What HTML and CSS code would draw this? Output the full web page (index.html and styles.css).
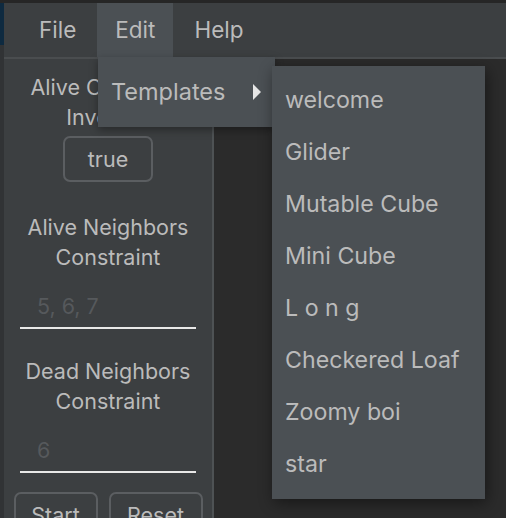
FILE: index.html
```html
<!DOCTYPE html>
<html>
<head>
<meta charset="utf-8">
<link rel="stylesheet" href="styles.css">
</head>
<body>
<div class="app">
  <div class="edge"></div>
  <div class="win">
    <div class="menubar">
      <div class="menu">File</div>
      <div class="menu active">Edit</div>
      <div class="menu">Help</div>
    </div>
    <div class="content">
      <aside class="sidebar">
        <div class="label first">Alive Cell Color Inverted</div>
        <button class="btn toggle">true</button>
        <div class="label gap">Alive Neighbors Constraint</div>
        <div class="field"><span class="ph">5, 6, 7</span></div>
        <div class="label gap2">Dead Neighbors Constraint</div>
        <div class="field"><span class="ph">6</span></div>
        <div class="actions">
          <button class="btn start">Start</button>
          <button class="btn reset">Reset</button>
        </div>
      </aside>
      <main class="main"></main>
    </div>
  </div>

  <div class="dropdown">
    <div class="item">Templates<svg class="arrow" width="10" height="16" viewBox="0 0 10 16"><polygon points="1,0 9,8 1,16" fill="#e6e6e6"/></svg></div>
  </div>
  <div class="submenu">
    <div class="sub">welcome</div>
    <div class="sub">Glider</div>
    <div class="sub">Mutable Cube</div>
    <div class="sub">Mini Cube</div>
    <div class="sub">L o n g</div>
    <div class="sub">Checkered Loaf</div>
    <div class="sub">Zoomy boi</div>
    <div class="sub">star</div>
  </div>
</div>
</body>
</html>
```
FILE: styles.css
```css
* { box-sizing: border-box; }
html, body { margin: 0; padding: 0; }
body {
  background: #2b2b2b;
  font-family: Inter, "Noto Sans", sans-serif;
  font-size: 21.5px;
  color: #bbbbbb;
  overflow: hidden;
}
.app {
  position: relative;
  width: 506px;
  height: 518px;
  display: flex;
  padding-top: 3px;
  background: #262626;
  overflow: hidden;
}
.edge {
  width: 4px;
  flex-shrink: 0;
  background: linear-gradient(#0e2a40 0 42px, #313335 42px);
}
.win {
  flex: 1;
  display: flex;
  flex-direction: column;
  min-height: 0;
}
.menubar {
  height: 56px;
  flex-shrink: 0;
  background: #3c3f41;
  border-bottom: 2px solid #4a4d4f;
  display: flex;
  gap: 3px;
  padding-left: 17px;
  font-size: 22.5px;
}
.menu {
  padding: 0 18px;
  display: flex;
  align-items: center;
  line-height: 30px;
}
.menu.active { background: #4b5054; }
.content {
  flex: 1;
  display: flex;
  min-height: 0;
}
.sidebar {
  width: 210px;
  flex-shrink: 0;
  background: #3c3f41;
  border-right: 2px solid #4e5254;
  display: flex;
  flex-direction: column;
  align-items: center;
  padding-top: 13px;
  overflow: hidden;
}
.sidebar > * { flex-shrink: 0; }
.label {
  width: 176px;
  text-align: center;
  line-height: 30px;
}
.label.gap { margin-top: 30px; }
.label.gap2 { margin-top: 27px; }
.btn {
  font: inherit;
  color: #bbbbbb;
  background: #3c3f41;
  border: 2px solid #5b5e61;
  border-radius: 7px;
  height: 46px;
  line-height: 30px;
  padding: 0;
}
.toggle { width: 90px; margin-top: 4px; }
.field {
  width: 176px;
  height: 45px;
  margin-top: 12px;
  border-bottom: 2px solid #e8e8e8;
  padding-left: 17px;
  display: flex;
  align-items: center;
  line-height: 30px;
}
.ph { color: #56595c; }
.actions {
  display: flex;
  gap: 11px;
  margin-top: 19px;
}
.start { width: 84px; }
.reset { width: 94px; }
.main {
  flex: 1;
  background: #2b2b2b;
}
.dropdown {
  position: absolute;
  left: 98px;
  top: 57px;
  width: 177px;
  height: 70px;
  background: #4b5054;
  padding: 9px 0;
  font-size: 23.5px;
  box-shadow: 0 3px 8px rgba(0,0,0,0.35);
}
.item {
  height: 52px;
  display: flex;
  align-items: center;
  padding-left: 13px;
  line-height: 30px;
}
.arrow { margin-left: auto; margin-right: 13px; }
.submenu {
  position: absolute;
  left: 272px;
  top: 66px;
  width: 213px;
  height: 433px;
  background: #4b5054;
  padding-top: 8px;
  font-size: 23.2px;
  box-shadow: 2px 4px 14px rgba(0,0,0,0.45);
}
.sub {
  height: 52px;
  display: flex;
  align-items: center;
  padding-left: 13px;
  line-height: 30px;
}
```
